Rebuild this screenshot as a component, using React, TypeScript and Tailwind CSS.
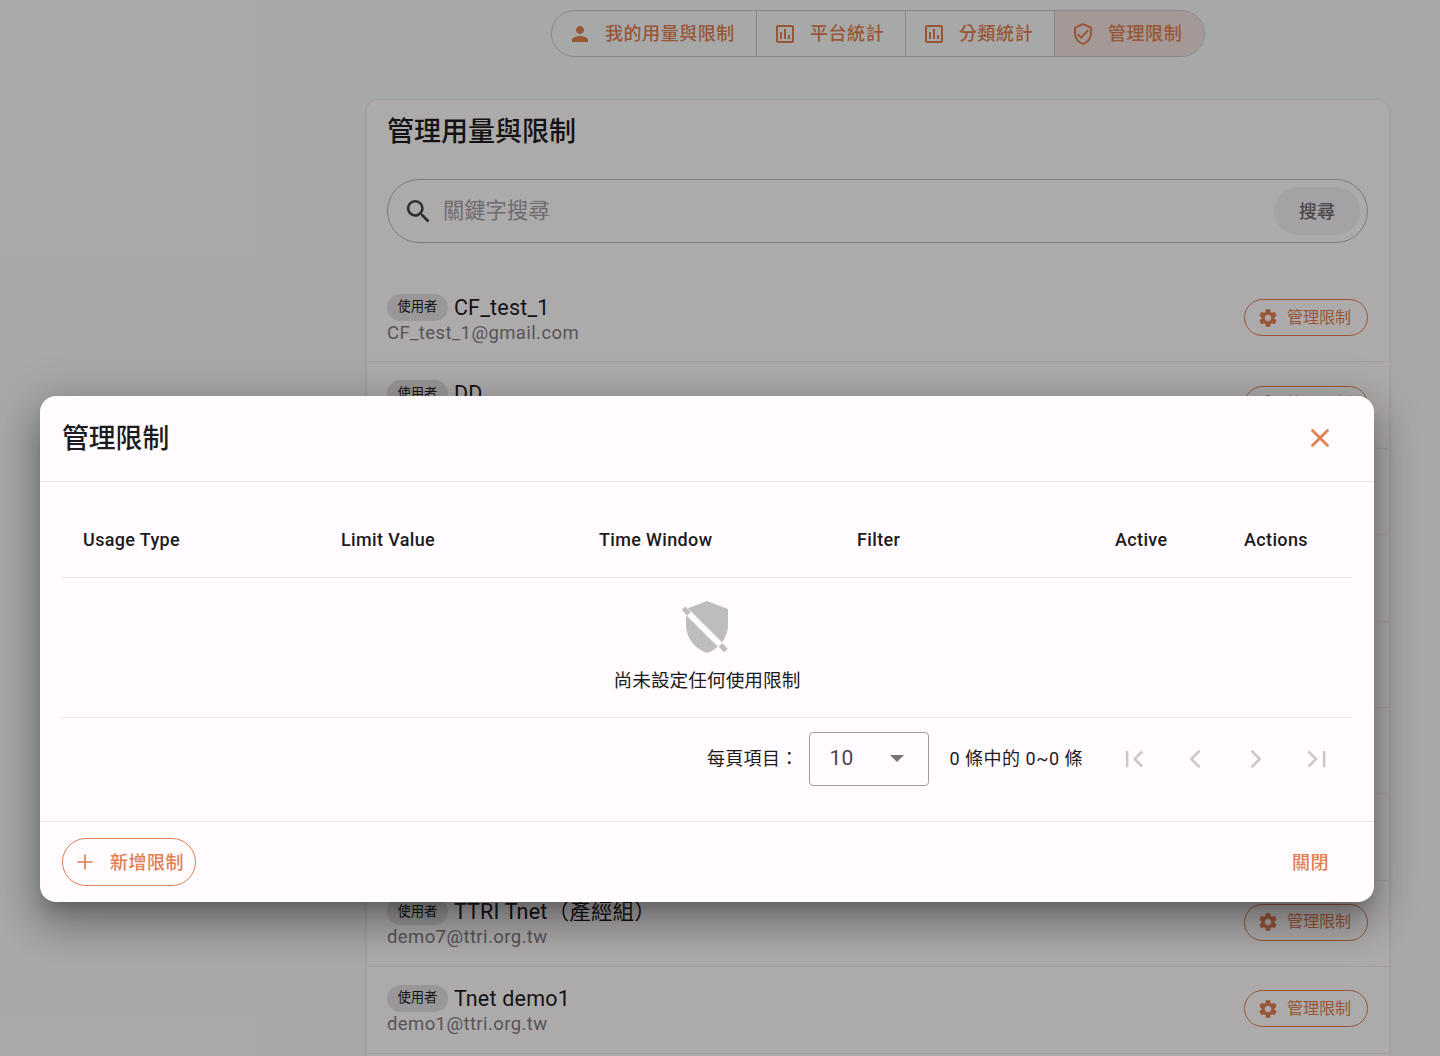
import { X, Plus, ChevronLeft, ChevronRight } from "lucide-react";

const fontStack = "font-['Roboto','Noto_Sans_CJK_TC',sans-serif]";

const accent = "text-[#e07f50]";

const users = [
  { name: "CF_test_1", email: "CF_test_1@gmail.com" },
  { name: "DD", email: "dd@ttri.org.tw" },
  { name: "demo2", email: "demo2@ttri.org.tw" },
  { name: "demo3", email: "demo3@ttri.org.tw" },
  { name: "demo4", email: "demo4@ttri.org.tw" },
  { name: "demo5", email: "demo5@ttri.org.tw" },
  { name: "demo6", email: "demo6@ttri.org.tw" },
  { name: "TTRI Tnet（產經組）", email: "demo7@ttri.org.tw" },
  { name: "Tnet demo1", email: "demo1@ttri.org.tw" },
];

function PersonIcon() {
  return (
    <svg width="24" height="24" viewBox="0 0 24 24" fill="currentColor" className="shrink-0">
      <path d="M12 12c2.21 0 4-1.79 4-4s-1.79-4-4-4-4 1.79-4 4 1.79 4 4 4zm0 2c-2.67 0-8 1.34-8 4v2h16v-2c0-2.66-5.33-4-8-4z" />
    </svg>
  );
}

function ChartIcon() {
  return (
    <svg width="24" height="24" viewBox="0 0 24 24" fill="currentColor" className="shrink-0">
      <path d="M19 3H5c-1.1 0-2 .9-2 2v14c0 1.1.9 2 2 2h14c1.1 0 2-.9 2-2V5c0-1.1-.9-2-2-2zm0 16H5V5h14v14z" />
      <path d="M7 10h2v7H7zm4-3h2v10h-2zm4 6h2v4h-2z" />
    </svg>
  );
}

function ShieldIcon() {
  return (
    <svg width="24" height="24" viewBox="0 0 24 24" fill="currentColor" className="shrink-0">
      <path d="M12 1L3 5v6c0 5.55 3.84 10.74 9 12 5.16-1.26 9-6.45 9-12V5l-9-4zm7 10c0 4.52-2.98 8.69-7 9.93-4.02-1.24-7-5.41-7-9.93V6.3l7-3.11 7 3.11V11zm-11.59.59L6 13l4 4 8-8-1.41-1.42L10 14.17z" />
    </svg>
  );
}

function GearIcon() {
  return (
    <svg width="22" height="22" viewBox="0 0 24 24" fill="currentColor" className="shrink-0 mr-[8.5px]">
      <path d="M19.14 12.94c.04-.3.06-.61.06-.94 0-.32-.02-.64-.07-.94l2.03-1.58c.18-.14.23-.41.12-.61l-1.92-3.32c-.12-.22-.37-.29-.59-.22l-2.39.96c-.5-.38-1.03-.7-1.62-.94l-.36-2.54c-.04-.24-.24-.41-.48-.41h-3.84c-.24 0-.43.17-.47.41l-.36 2.54c-.59.24-1.13.57-1.62.94l-2.39-.96c-.22-.08-.47 0-.59.22L2.74 8.87c-.12.21-.08.47.12.61l2.03 1.58c-.05.3-.09.63-.09.94s.02.64.07.94l-2.03 1.58c-.18.14-.23.41-.12.61l1.92 3.32c.12.22.37.29.59.22l2.39-.96c.5.38 1.03.7 1.62.94l.36 2.54c.05.24.24.41.48.41h3.84c.24 0 .44-.17.47-.41l.36-2.54c.59-.24 1.13-.56 1.62-.94l2.39.96c.22.08.47 0 .59-.22l1.92-3.32c.12-.22.07-.47-.12-.61l-2.01-1.58zM12 15.6c-1.98 0-3.6-1.62-3.6-3.6s1.62-3.6 3.6-3.6 3.6 1.62 3.6 3.6-1.62 3.6-3.6 3.6z" />
    </svg>
  );
}

function SearchIcon() {
  return (
    <svg width="31" height="31" viewBox="0 0 24 24" fill="#49454f" className="shrink-0 mr-[9px]">
      <path d="M15.5 14h-.79l-.28-.27C15.41 12.59 16 11.11 16 9.5 16 5.91 13.09 3 9.5 3S3 5.91 3 9.5 5.91 16 9.5 16c1.61 0 3.09-.59 4.23-1.57l.27.28v.79l5 4.99L20.49 19l-4.99-5zm-6 0C7.01 14 5 11.99 5 9.5S7.01 5 9.5 5 14 7.01 14 9.5 11.99 14 9.5 14z" />
    </svg>
  );
}

function EmptyShieldIcon() {
  return (
    <svg width="46" height="52" viewBox="0 0 46 52" className="mr-[4px]">
      <path d="M25 0 46 8v16c0 13-9 24-21 28C13 48 4 37 4 24V8z" fill="#bdbdbd" />
      <path d="M1.5 7.2 44 49.6" stroke="#fffbff" strokeWidth="6" />
      <path d="M1.5 7.2 7 12.7M38.5 44 44 49.6" stroke="#bdbdbd" strokeWidth="5" />
    </svg>
  );
}

function SegTab({
  label,
  icon,
  active,
  className,
}: {
  label: string;
  icon: React.ReactNode;
  active?: boolean;
  className: string;
}) {
  return (
    <div
      className={`flex items-center gap-[13px] pl-[16px] text-[18px] tracking-[0.55px] font-medium whitespace-nowrap ${accent} ${className} ${
        active ? "bg-[#f2e2df]" : ""
      }`}
    >
      {icon}
      <span>{label}</span>
    </div>
  );
}

function UserRow({ name, email }: { name: string; email: string }) {
  return (
    <div className="flex items-center justify-between h-[86.4px] shrink-0 pl-[20px] pr-[21px] border-b border-[#f0ebed] pt-[2px]">
      <div>
        <div className="flex items-center gap-[6px] h-[27px]">
          <span className="flex items-center h-[27px] px-[10.5px] rounded-full bg-[#e2dfe1] text-[13.3px] text-[#1d1b20]">
            使用者
          </span>
          <span className="pt-[1px] text-[21.5px] tracking-[0.2px] text-[#1d1b20]">{name}</span>
        </div>
        <div className="text-[18.5px] tracking-[0.4px] leading-[25px] text-[#807d83]">{email}</div>
      </div>
      <button className="flex items-center h-[37px] w-[124px] mb-[4px] pl-[11.5px] rounded-full border border-[#e07f50] text-[#e07f50] text-[16px]">
        <GearIcon />
        管理限制
      </button>
    </div>
  );
}

export default function App() {
  return (
    <div className={`relative h-screen overflow-hidden bg-[#f7faf8] ${fontStack}`}>
      {/* Segmented tabs */}
      <div className="flex justify-start pt-[10px] pl-[551px]">
        <div className="flex h-[47px] w-[654px] rounded-full border border-[#c8c6c9] overflow-hidden">
          <SegTab label="我的用量與限制" icon={<PersonIcon />} className="w-[205px] border-r border-[#c8c6c9]" />
          <SegTab label="平台統計" icon={<ChartIcon />} className="w-[149px] border-r border-[#c8c6c9]" />
          <SegTab label="分類統計" icon={<ChartIcon />} className="w-[149px] border-r border-[#c8c6c9]" />
          <SegTab label="管理限制" active icon={<ShieldIcon />} className="flex-1" />
        </div>
      </div>

      {/* Main card */}
      <div className="ml-[366px] mt-[42px] w-[1024px] pb-[20px] bg-[#fffbfc] rounded-t-[12px] border-x border-t border-[#f0ebed] shadow-sm">
        <h1 className="px-[20px] pt-[12px] text-[27px] leading-[40px] font-medium text-[#1d1b20]">管理用量與限制</h1>
        <div className="ml-[20px] mr-[21px] mt-[27px] h-[64px] rounded-full border border-[#b8b5ba] flex items-center pl-[15px] pr-[7px]">
          <SearchIcon />
          <span className="flex-1 text-[21.3px] text-[#a3a0a6]">關鍵字搜尋</span>
          <span className="flex items-center justify-center w-[86px] h-[48px] rounded-full bg-[#f2eff2] text-[18px] font-medium text-[#6b6970]">
            搜尋
          </span>
        </div>
        <div className="mt-[33px] flex flex-col">
          {users.map((u, i) => (
            <UserRow key={i} name={u.name} email={u.email} />
          ))}
        </div>
      </div>

      {/* Backdrop */}
      <div className="absolute inset-0 bg-[rgba(0,0,0,0.32)]" />

      {/* Dialog */}
      <div className="absolute left-[40px] top-[396px] w-[1334px] h-[506px] flex flex-col rounded-[16px] bg-[#fffbff] shadow-[0_11px_15px_-7px_rgba(0,0,0,0.2),0_24px_38px_3px_rgba(0,0,0,0.2),0_9px_46px_8px_rgba(0,0,0,0.18)]">
        <div className="flex items-center justify-between h-[86px] shrink-0 px-[22px] border-b border-[#e6e1e5]">
          <h2 className="text-[26.8px] font-medium text-[#1d1b20] pt-[2px]">管理限制</h2>
          <X size={30} strokeWidth={2.2} className={`${accent} mr-[17px] mb-[2px]`} />
        </div>

        <div className="flex-1 px-[22px]">
          <div className="grid grid-cols-[2fr_2fr_2fr_2fr_1fr_1fr] h-[96px] items-center pt-[20px] border-b border-[#e6e1e5] text-[18px] tracking-[0.35px] font-medium text-[#1d1b20]">
            <span className="pl-[21px]">Usage Type</span>
            <span className="pl-[21px]">Limit Value</span>
            <span className="pl-[21px]">Time Window</span>
            <span className="pl-[21px]">Filter</span>
            <span className="pl-[21px]">Active</span>
            <span className="pl-[21px]">Actions</span>
          </div>

          <div className="flex flex-col items-center h-[140px] border-b border-[#e6e1e5] pt-[23px]">
            <EmptyShieldIcon />
            <span className="mt-[15px] text-[18.7px] leading-[27px] text-[#1d1b20]">尚未設定任何使用限制</span>
          </div>

          <div className="flex items-center justify-end h-[81px] text-[18px] tracking-[0.3px] text-[#1d1b20]">
            <span>每頁項目：</span>
            <div className="flex items-center justify-between w-[120px] h-[54px] ml-[10px] pl-[20px] pr-[24px] rounded-[4px] border border-[#a19ea3] text-[21px] text-[#49454f]">
              <span>10</span>
              <span className="w-0 h-0 border-x-[7.5px] border-x-transparent border-t-[7.5px] border-t-[#757575]" />
            </div>
            <span className="ml-[21px] mr-[36px] tracking-[0.5px]">0 條中的 0~0 條</span>
            <div className="flex items-center gap-[31px] text-[#c9c7cb] mr-[20px]">
              <svg width="30" height="30" viewBox="0 0 24 24" fill="none" stroke="currentColor" strokeWidth="2">
                <path d="M6.5 5.5v13M18.5 6l-6 6 6 6" />
              </svg>
              <ChevronLeft size={30} strokeWidth={2} />
              <ChevronRight size={30} strokeWidth={2} />
              <svg width="30" height="30" viewBox="0 0 24 24" fill="none" stroke="currentColor" strokeWidth="2">
                <path d="M17.7 5.5v13M5.2 6l6 6-6 6" />
              </svg>
            </div>
          </div>
        </div>

        <div className="flex items-center justify-between h-[81px] shrink-0 px-[22px] border-t border-[#e6e1e5]">
          <button className={`flex items-center h-[48px] w-[134px] pl-[10px] rounded-full border border-[#e07f50] text-[18px] tracking-[0.5px] font-medium ${accent}`}>
            <Plus size={24} strokeWidth={1.7} className="mr-[13px]" />
            新增限制
          </button>
          <span className={`mr-[23px] text-[18px] tracking-[0.5px] font-medium ${accent}`}>關閉</span>
        </div>
      </div>
    </div>
  );
}
